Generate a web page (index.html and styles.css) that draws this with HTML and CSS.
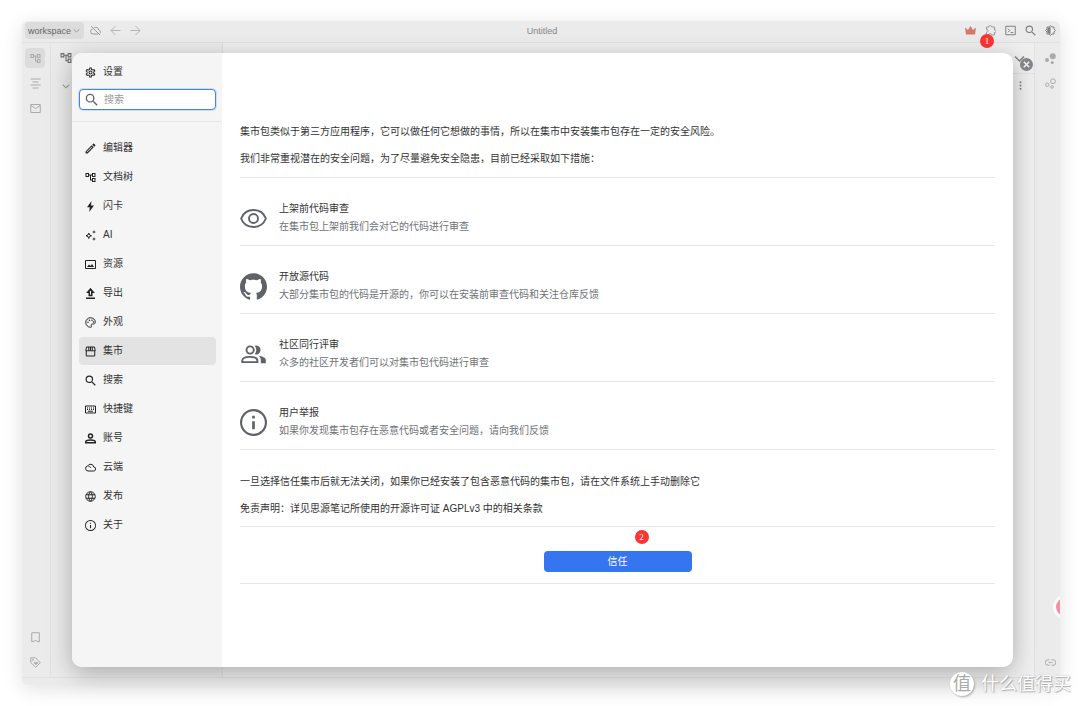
FILE: index.html
```html
<!DOCTYPE html>
<html lang="zh-CN">
<head>
<meta charset="utf-8">
<meta name="viewport" content="width=device-width, initial-scale=1">
<title>Untitled</title>
<link rel="stylesheet" href="styles.css">
</head>
<body>
<svg class="sprite" aria-hidden="true">
  <symbol id="tree" viewBox="1 1 22 22"><path d="M22 11V3h-7v3H9V3H2v8h7V8h2v10h4v3h7v-8h-7v3h-2V8h2v3h7zM7 9H4V5h3v4zm10 6h3v4h-3v-4zm0-10h3v4h-3V5z"/></symbol>
  <symbol id="gear" viewBox="1 1 22 22"><path d="M19.43 12.98c.04-.32.07-.64.07-.98s-.03-.66-.07-.98l2.11-1.65c.19-.15.24-.42.12-.64l-2-3.46c-.12-.22-.39-.3-.61-.22l-2.49 1c-.52-.4-1.08-.73-1.69-.98l-.38-2.65C14.46 2.18 14.25 2 14 2h-4c-.25 0-.46.18-.49.42l-.38 2.65c-.61.25-1.17.59-1.69.98l-2.49-1c-.23-.09-.49 0-.61.22l-2 3.46c-.13.22-.07.49.12.64l2.11 1.65c-.04.32-.07.65-.07.98s.03.66.07.98l-2.11 1.65c-.19.15-.24.42-.12.64l2 3.46c.12.22.39.3.61.22l2.49-1c.52.4 1.08.73 1.69.98l.38 2.65c.03.24.24.42.49.42h4c.25 0 .46-.18.49-.42l.38-2.65c.61-.25 1.17-.59 1.69-.98l2.49 1c.23.09.49 0 .61-.22l2-3.46c.12-.22.07-.49-.12-.64l-2.11-1.65zm-2-1.6c.06.4.07.9 0 1.25l-.14 1.13 1.9 1.5-.8 1.4-2.2-.9-.9.7c-.5.37-.9.6-1.3.77l-1.1.43-.3 2.34h-1.6l-.3-2.34-1.1-.43c-.5-.2-.9-.43-1.3-.75l-.9-.7-2.2.88-.8-1.4 1.9-1.5-.14-1.13c-.06-.5-.06-.9 0-1.25l.14-1.13-1.9-1.5.8-1.4 2.2.9.9-.7c.4-.33.9-.6 1.3-.77l1.1-.43.3-2.34h1.6l.3 2.34 1.1.43c.5.2.9.43 1.3.75l.9.7 2.2-.88.8 1.4-1.9 1.5zM12 8a4 4 0 1 0 0 8 4 4 0 0 0 0-8zm0 6a2 2 0 1 1 0-4 2 2 0 0 1 0 4z"/></symbol>
  <symbol id="search" viewBox="2 2 19 19"><path d="M15.5 14h-.79l-.28-.27A6.47 6.47 0 0 0 16 9.5 6.5 6.5 0 1 0 9.5 16c1.61 0 3.09-.59 4.23-1.57l.27.28v.79l5 4.99L20.49 19l-4.99-5zm-6 0a4.5 4.5 0 1 1 0-9 4.5 4.5 0 0 1 0 9z"/></symbol>
  <symbol id="pen" viewBox="2 2 20 20"><path d="M14.06 9.02l.92.92L5.92 19H5v-.92l9.06-9.06M17.66 3c-.25 0-.51.1-.7.29l-1.83 1.83 3.75 3.75 1.83-1.83c.39-.39.39-1.02 0-1.41l-2.34-2.34c-.2-.2-.45-.29-.71-.29zm-3.6 3.19L3 17.25V21h3.75L17.81 9.94l-3.75-3.75z"/></symbol>
  <symbol id="flash" viewBox="1 1 22 22"><path d="M14 1 5 13.5h5.5L9.500 23 19 10h-6z"/></symbol>
  <symbol id="spark" viewBox="1 1 22 22"><path class="line" d="M8.500 7l1.500 4 4 1.500-4 1.500-1.500 4-1.500-4-4-1.500 4-1.500z"/><path d="M19 1l1 3 3 1-3 1-1 3-1-3-3-1 3-1zM19 15l1 3 3 1-3 1-1 3-1-3-3-1 3-1z"/></symbol>
  <symbol id="image" viewBox="1 1 22 22"><path class="line" d="M2 4h20v16H2z"/><path d="M5 17l4-5 3 3 3-4 4 6z"/></symbol>
  <symbol id="export" viewBox="1 1 22 22"><path class="line thick" d="M9.500 16V9.500H6.500L12 3l5.500 6.500h-3V16zM3 21.500h18"/></symbol>
  <symbol id="palette" viewBox="1 1 22 22"><path class="line" d="M12 2.500a9.500 9.500 0 1 0 0 19c3 0 2-2 1.500-3-1-2.500.5-3.500 2.500-3.500h2c2.500 0 3.500-2 3.500-4 0-5-4.500-8.500-9.500-8.500z"/><circle cx="7" cy="11.500" r="1.500"/><circle cx="10" cy="7.500" r="1.500"/><circle cx="15" cy="7.500" r="1.500"/><circle cx="18" cy="11" r="1.500"/></symbol>
  <symbol id="bazaar" viewBox="1 1 22 22"><path class="line" d="M3.500 11v10h17V11M4 3h16l1.500 7.500h-19zM8.500 3v7M12 3v7M15.500 3v7"/></symbol>
  <symbol id="keyboard" viewBox="1 1 22 22"><path class="line" d="M2 5h20v14H2z"/><path d="M5 8h2v2H5zm4 0h2v2H9zm4 0h2v2h-2zm4 0h2v2h-2zM5 11h2v2H5zm4 0h2v2H9zm4 0h2v2h-2zm4 0h2v2h-2zM7 14.500h10v2H7z"/></symbol>
  <symbol id="person" viewBox="1 1 22 22"><circle class="line thick" cx="12" cy="7" r="4"/><path class="line thick" d="M2.500 20.500v-2c0-5 19-5 19 0v2z"/></symbol>
  <symbol id="cloud" viewBox="1 1 22 22"><path class="line" d="M7 19a5 5 0 0 1-.8-9.900A6.500 6.500 0 0 1 18.500 11a4 4 0 0 1-.5 8zM8 10c3 0 4 1 4.500 3"/></symbol>
  <symbol id="cloudoff" viewBox="1 1 22 22"><path class="line" d="M17 19H7a5 5 0 0 1-.8-9.900M9.500 6A6.500 6.500 0 0 1 18.500 11a4 4 0 0 1 2.500 6.500M3 3l18 18"/></symbol>
  <symbol id="globe" viewBox="1 1 22 22"><path class="line" d="M2.500 12a9.500 9.500 0 1 0 19 0 9.500 9.500 0 1 0-19 0zM3.500 8.500h17M3.500 15.500h17M12 2.500c-5 5-5 14 0 19 5-5 5-14 0-19z"/></symbol>
  <symbol id="info" viewBox="2 2 20 20"><path d="M11 7h2v2h-2zm0 4h2v6h-2zm1-9a10 10 0 1 0 0 20 10 10 0 0 0 0-20zm0 18.400a8.400 8.400 0 1 1 0-16.800 8.400 8.400 0 0 1 0 16.800z"/></symbol>
  <symbol id="eye" viewBox="0 0 24 24"><path class="line thin" d="M1 12C3 7 7.300 4.500 12 4.500S21 7 23 12c-2 5-6.300 7.500-11 7.500S3 17 1 12z"/><circle class="line thin" cx="12" cy="12" r="4"/></symbol>
  <symbol id="github" viewBox="0 0 24 24"><path d="M12 .297c-6.630 0-12 5.373-12 12 0 5.303 3.438 9.800 8.205 11.385.6.113.82-.258.82-.577 0-.285-.01-1.040-.015-2.040-3.338.724-4.042-1.610-4.042-1.610C4.422 18.070 3.633 17.700 3.633 17.700c-1.087-.744.084-.729.084-.729 1.205.084 1.838 1.236 1.838 1.236 1.070 1.835 2.809 1.305 3.495.998.108-.776.417-1.305.76-1.605-2.665-.3-5.466-1.332-5.466-5.930 0-1.310.465-2.380 1.235-3.220-.135-.303-.54-1.523.105-3.176 0 0 1.005-.322 3.300 1.230.96-.267 1.980-.399 3-.405 1.020.006 2.040.138 3 .405 2.280-1.552 3.285-1.230 3.285-1.230.645 1.653.24 2.873.12 3.176.765.840 1.230 1.910 1.230 3.220 0 4.610-2.805 5.625-5.475 5.920.42.360.81 1.096.81 2.220 0 1.606-.015 2.896-.015 3.286 0 .315.21.69.825.57C20.565 22.092 24 17.592 24 12.297c0-6.627-5.373-12-12-12"/></symbol>
  <symbol id="people" viewBox="0 0 24 24"><path class="line thin" d="M2 18.800v-1.300c0-4.500 13.500-4.500 13.500 0v1.300z"/><circle class="line thin" cx="9" cy="8" r="3.200"/><path d="M13 4.200A4 4 0 1 1 13 11.800c1.900-2 1.900-5.600 0-7.600zM16.700 13.200c3 .4 6.300 1.700 6.300 4v2.500h-4.500v-2.500c0-1.700-.7-3-1.800-4z"/></symbol>
  <symbol id="crown" viewBox="1 1 22 22"><path d="M1 6l6 5 5-8 5 8 6-5-2 14H3z"/></symbol>
  <symbol id="puzzle" viewBox="1 1 22 22"><path class="line" d="M4 5h5c-1-4 6-4 5 0h6v6c4-1 4 6 0 5v5h-6c1-4-6-4-5 0H4v-6c4 1 4-6 0-5z"/></symbol>
  <symbol id="terminal" viewBox="1 1 22 22"><path class="line" d="M2.500 3.500h19v17h-19zM7 8.500l3.500 3.500L7 15.500M12.500 16h5"/></symbol>
  <symbol id="contrast" viewBox="1 1 22 22"><path class="line" d="M12 2.500l3 2.500h4v4l3 3-3 3v4h-4l-3 2.500L9 19H5v-4l-3-3 3-3V5h4z"/><path d="M12 5v14c-9 0-9-14 0-14z"/></symbol>
  <symbol id="back" viewBox="1 1 22 22"><path class="line" d="M22 12H3M12 3l-9 9 9 9"/></symbol>
  <symbol id="forward" viewBox="1 1 22 22"><path class="line" d="M2 12h19M12 3l9 9-9 9"/></symbol>
  <symbol id="down" viewBox="1 1 22 22"><path class="line thick" d="M3 8l9 9 9-9"/></symbol>
  <symbol id="outline" viewBox="1 1 22 22"><path class="line" d="M2 3h20M6 9h12M2 15h20M6 21h12"/></symbol>
  <symbol id="mail" viewBox="1 1 22 22"><path class="line" d="M2.500 4h19v16h-19zM3 6l9 6 9-6"/></symbol>
  <symbol id="bookmark" viewBox="1 1 22 22"><path class="line" d="M4.500 2.500h15v18.500l-7.500-3-7.500 3z"/></symbol>
  <symbol id="tag" viewBox="1 1 22 22"><path class="line" d="M2.500 2.500h9.500l9.500 10-9 9-10-9.500z"/><circle cx="7" cy="7" r="1.800"/><path d="M13 17l-4-4c0-3 3-3 4-1 2-2 5 0 3.500 2z"/></symbol>
  <symbol id="graph" viewBox="1 1 22 22"><circle cx="16.500" cy="7.500" r="6"/><circle cx="5" cy="15" r="4"/><circle cx="15.500" cy="20" r="3"/></symbol>
  <symbol id="graphline" viewBox="1 1 22 22"><circle class="line" cx="17" cy="7.500" r="4.800"/><circle class="line" cx="5.500" cy="14.500" r="3.500"/><circle class="line" cx="15" cy="19" r="2.500"/></symbol>
  <symbol id="link" viewBox="1 1 22 22"><path class="line" d="M10 6.500H7a5.500 5.500 0 0 0 0 11h3M14 6.500h3a5.500 5.500 0 0 1 0 11h-3M8 12h8"/></symbol>
  <symbol id="more" viewBox="1 1 22 22"><circle cx="12" cy="4" r="2.300"/><circle cx="12" cy="12" r="2.300"/><circle cx="12" cy="20" r="2.300"/></symbol>
  <symbol id="close" viewBox="0 0 24 24"><circle cx="12" cy="12" r="12"/><path class="cross" d="M7 7l10 10M17 7L7 17"/></symbol>
</svg>

<div class="window">
  <header class="titlebar">
    <div class="tools">
      <button class="workspace" type="button">workspace <svg class="caret"><use href="#down"/></svg></button>
      <button class="tool" type="button" aria-label="同步"><svg><use href="#cloudoff"/></svg></button>
      <button class="tool pale" type="button" aria-label="后退"><svg><use href="#back"/></svg></button>
      <button class="tool pale" type="button" aria-label="前进"><svg><use href="#forward"/></svg></button>
    </div>
    <div class="doc-title">Untitled</div>
    <div class="tools tools-end">
      <button class="tool crown" type="button" aria-label="会员"><svg><use href="#crown"/></svg></button>
      <button class="tool" type="button" aria-label="插件"><svg><use href="#puzzle"/></svg><span class="step step-one">1</span></button>
      <button class="tool dark" type="button" aria-label="命令"><svg><use href="#terminal"/></svg></button>
      <button class="tool dark" type="button" aria-label="搜索"><svg><use href="#search"/></svg></button>
      <button class="tool dark" type="button" aria-label="外观模式"><svg><use href="#contrast"/></svg></button>
    </div>
  </header>
  <div class="workbench">
    <nav class="dock">
      <button class="dock-item active" type="button" aria-label="文档树"><svg><use href="#tree"/></svg></button>
      <button class="dock-item" type="button" aria-label="大纲"><svg><use href="#outline"/></svg></button>
      <button class="dock-item" type="button" aria-label="收集箱"><svg><use href="#mail"/></svg></button>
      <span class="spacer"></span>
      <button class="dock-item" type="button" aria-label="书签"><svg><use href="#bookmark"/></svg></button>
      <button class="dock-item" type="button" aria-label="标签"><svg><use href="#tag"/></svg></button>
    </nav>
    <aside class="files">
      <svg class="files-icon"><use href="#tree"/></svg>
      <svg class="files-caret"><use href="#down"/></svg>
    </aside>
    <section class="editor">
      <div class="tabs"><svg><use href="#down"/></svg></div>
      <div class="crumbs"><svg><use href="#more"/></svg></div>
    </section>
    <nav class="dock dock-end">
      <button class="dock-item" type="button" aria-label="关系图"><svg><use href="#graph"/></svg></button>
      <button class="dock-item" type="button" aria-label="全局关系图"><svg><use href="#graphline"/></svg></button>
      <span class="spacer"></span>
      <button class="dock-item" type="button" aria-label="反链"><svg><use href="#link"/></svg></button>
    </nav>
  </div>
  <footer class="statusbar"></footer>
  <div class="float-clip"><span class="float-ball"></span></div>
</div>

<div class="dialog" role="dialog" aria-label="设置">
  <button class="dialog-close" type="button" aria-label="关闭"><svg><use href="#close"/></svg></button>
  <aside class="side">
    <div class="side-head">
      <div class="side-title"><svg><use href="#gear"/></svg>设置</div>
      <label class="search"><svg><use href="#search"/></svg><input type="text" placeholder="搜索" aria-label="搜索"></label>
    </div>
    <nav class="menu">
      <button type="button"><svg><use href="#pen"/></svg>编辑器</button>
      <button type="button"><svg><use href="#tree"/></svg>文档树</button>
      <button type="button"><svg><use href="#flash"/></svg>闪卡</button>
      <button type="button"><svg><use href="#spark"/></svg>AI</button>
      <button type="button"><svg><use href="#image"/></svg>资源</button>
      <button type="button"><svg><use href="#export"/></svg>导出</button>
      <button type="button"><svg><use href="#palette"/></svg>外观</button>
      <button type="button" class="current"><svg><use href="#bazaar"/></svg>集市</button>
      <button type="button"><svg><use href="#search"/></svg>搜索</button>
      <button type="button"><svg><use href="#keyboard"/></svg>快捷键</button>
      <button type="button"><svg><use href="#person"/></svg>账号</button>
      <button type="button"><svg><use href="#cloud"/></svg>云端</button>
      <button type="button"><svg><use href="#globe"/></svg>发布</button>
      <button type="button"><svg><use href="#info"/></svg>关于</button>
    </nav>
  </aside>
  <main class="content">
    <div class="note">
      <p>集市包类似于第三方应用程序，它可以做任何它想做的事情，所以在集市中安装集市包存在一定的安全风险。</p>
      <p>我们非常重视潜在的安全问题，为了尽量避免安全隐患，目前已经采取如下措施：</p>
    </div>
    <div class="measure"><svg><use href="#eye"/></svg><div><h3>上架前代码审查</h3><p>在集市包上架前我们会对它的代码进行审查</p></div></div>
    <div class="measure"><svg><use href="#github"/></svg><div><h3>开放源代码</h3><p>大部分集市包的代码是开源的，你可以在安装前审查代码和关注仓库反馈</p></div></div>
    <div class="measure"><svg><use href="#people"/></svg><div><h3>社区同行评审</h3><p>众多的社区开发者们可以对集市包代码进行审查</p></div></div>
    <div class="measure"><svg><use href="#info"/></svg><div><h3>用户举报</h3><p>如果你发现集市包存在恶意代码或者安全问题，请向我们反馈</p></div></div>
    <div class="note note-end">
      <p>一旦选择信任集市后就无法关闭，如果你已经安装了包含恶意代码的集市包，请在文件系统上手动删除它</p>
      <p>免责声明：详见思源笔记所使用的开源许可证 AGPLv3 中的相关条款</p>
    </div>
    <div class="confirm">
      <button type="button" class="trust">信任<span class="step step-two">2</span></button>
    </div>
  </main>
</div>

<div class="watermark"><span class="seal">值</span>什么值得买</div>
</body>
</html>
```
FILE: styles.css
```css
* { box-sizing: border-box; }

body {
  margin: 0;
  min-height: 100vh;
  padding: 21px 20px 21px 22px;
  display: flex;
  position: relative;
  overflow: hidden;
  background: #fff;
  color: #333;
  font: 10px/18px "Liberation Sans", "Noto Sans CJK SC", sans-serif;
}

h3, p { margin: 0; font-size: inherit; font-weight: 400; }

button {
  border: 0;
  padding: 0;
  background: none;
  color: inherit;
  font: inherit;
}

svg { display: block; width: 11px; height: 11px; flex: none; fill: currentColor; }
.sprite { position: absolute; width: 0; height: 0; }
.line { fill: none; stroke: currentColor; stroke-width: 2; }
.thick { stroke-width: 3; }
.thin { stroke-width: 1.7; }
.cross { stroke: #eee; stroke-width: 3; }

.window {
  flex: 1;
  display: flex;
  flex-direction: column;
  position: relative;
  border-radius: 6px;
  background: #ebebeb;
  box-shadow: 0 4px 20px rgba(0, 0, 0, .12);
}

.titlebar {
  display: grid;
  grid-template-columns: 1fr auto 1fr;
  align-items: center;
  height: 22px;
  padding: 0 4px 2px 3px;
  border-bottom: 1px solid #e1e1e1;
  font-size: 9px;
  color: #858585;
}
.tools { display: flex; align-items: center; gap: 9px; }
.tools-end { justify-content: flex-end; }
.doc-title { padding-left: 3px; }
.tool { position: relative; color: #999; }
.pale { color: #b5b5b5; }
.dark { color: #808080; }
.crown { color: #d6766b; }
.workspace {
  display: flex;
  align-items: center;
  gap: 2px;
  height: 17px;
  padding: 0 4px 0 3px;
  margin-right: -3px;
  border-radius: 4px;
  background: #dcdcdc;
  color: #666;
}
.caret { width: 7px; height: 7px; color: #999; }

.workbench { flex: 1; display: flex; }
.dock {
  display: flex;
  flex-direction: column;
  gap: 5px;
  width: 29px;
  padding: 5px 5px 5px 3px;
  border-right: 1px solid #e1e1e1;
}
.dock-end { width: 26px; padding: 5px 2px 5px 7px; border-right: 0; border-left: 1px solid #e1e1e1; }
.dock-item { display: grid; place-items: center; height: 20px; border-radius: 4px; color: #aaa; }
.dock-item.active { background: #dcdcdc; }
.spacer { flex: 1; }
.files { width: 172px; padding: 9px; border-right: 1px solid #e1e1e1; color: #6d6d6d; }
.files-icon { width: 12px; height: 12px; }
.files-caret { width: 8px; height: 8px; margin: 18px 2px; color: #999; }
.editor { flex: 1; background: #efefef; color: #808080; }
.tabs { display: flex; justify-content: flex-end; height: 31px; padding: 10px 9px; border-bottom: 1px solid #e1e1e1; }
.crumbs { display: flex; justify-content: flex-end; padding: 7px 9px; }
.crumbs svg { width: 9px; height: 9px; }
.statusbar { height: 8px; border-top: 1px solid #e1e1e1; }

.float-clip {
  position: absolute;
  right: 0;
  bottom: 60px;
  width: 10px;
  height: 36px;
  overflow: hidden;
}
.float-ball {
  display: block;
  width: 24px;
  height: 24px;
  margin: 6px 3px;
  border: 3px solid #fafafa;
  border-radius: 50%;
  background: #ef8fa8;
}

.dialog {
  position: absolute;
  inset: 53px 67px 39px 72px;
  display: flex;
  border-radius: 10px;
  background: #fff;
  box-shadow: 0 6px 24px rgba(0, 0, 0, .28);
}
.dialog-close { position: absolute; top: 5px; right: -20px; color: #828388; }
.dialog-close svg { width: 13px; height: 13px; }

.side { width: 150px; border-radius: 10px 0 0 10px; background: #f5f5f5; }
.side-head { padding: 10px 6px 11px 7px; border-bottom: 1px solid #e6e6e6; }
.side-title { display: flex; align-items: center; gap: 7px; padding-left: 6px; margin-bottom: 8px; }
.search {
  display: flex;
  align-items: center;
  gap: 6px;
  height: 21px;
  padding: 0 5px;
  border: 1px solid #4a7fec;
  border-radius: 4px;
  background: #fff;
  box-shadow: 0 0 0 1px #cfdcf8;
  color: #5f6368;
}
.search svg { width: 13px; height: 13px; }
.search input {
  flex: 1;
  min-width: 0;
  padding: 0;
  border: 0;
  outline: 0;
  background: none;
  font: inherit;
}
.search input::placeholder { color: #9a9a9a; }

.menu { display: flex; flex-direction: column; gap: 1px; padding: 12px 6px 12px 7px; }
.menu button {
  display: flex;
  align-items: center;
  gap: 7px;
  height: 28px;
  padding: 0 6px;
  border-radius: 4px;
}
.menu svg, .side-title svg { color: #222; }
.menu .current { background: #e3e3e3; }

.content { flex: 1; min-width: 0; padding: 65px 18px 18px; }
.note { padding-bottom: 5px; border-bottom: 1px solid #e6e6e6; line-height: 27px; }
.note-end { padding-top: 18px; padding-bottom: 4px; }
.measure {
  display: flex;
  align-items: center;
  gap: 12px;
  padding: 22px 0 9px;
  border-bottom: 1px solid #e6e6e6;
}
.measure svg { width: 27px; height: 27px; color: #5f6368; }
.measure p { color: #6f7276; }
.confirm { display: flex; justify-content: center; padding: 24px 0 11px; border-bottom: 1px solid #e6e6e6; }
.trust {
  position: relative;
  width: 148px;
  height: 21px;
  border-radius: 4px;
  background: #3575f0;
  color: #fff;
}

.step {
  position: absolute;
  width: 14px;
  height: 14px;
  border-radius: 50%;
  background: #fb3434;
  color: #fff;
  font: 9px/14px "Liberation Serif", serif;
  text-align: center;
}
.step-one { top: 9px; left: -5px; }
.step-two { top: -21px; left: 91px; }

.watermark {
  position: absolute;
  right: 9px;
  bottom: 9px;
  display: flex;
  align-items: center;
  gap: 7px;
  color: #fff;
  font-size: 18px;
  line-height: 26px;
  text-shadow: 1px 1px 1px #aaa, 0 0 1px #aaa;
}
.seal {
  width: 24px;
  height: 24px;
  border-radius: 50%;
  background: #fff;
  box-shadow: 1px 1px 2px #aaa;
  color: #aaa;
  line-height: 24px;
  text-align: center;
  text-shadow: none;
}
```
